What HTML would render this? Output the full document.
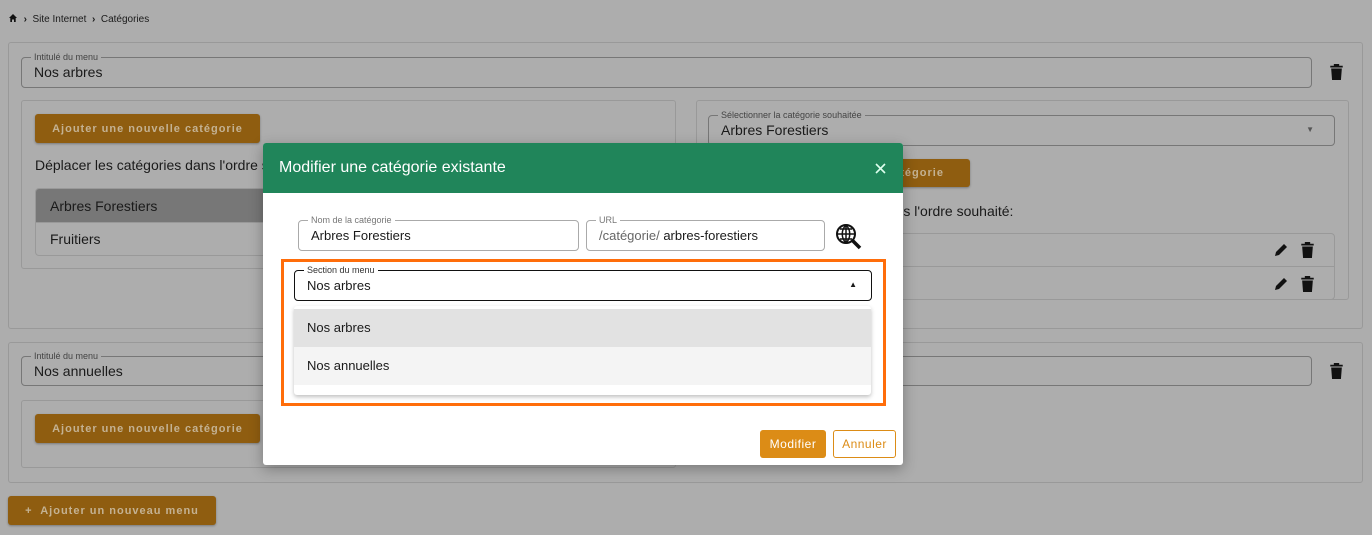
<!DOCTYPE html>
<html><head><meta charset="utf-8"><style>
*{box-sizing:border-box;margin:0;padding:0}
body{width:1372px;height:535px;overflow:hidden;background:#adadad;font-family:"Liberation Sans",sans-serif;color:#1a1a1a;position:relative}
.abs{position:absolute}
.card{position:absolute;border:1px solid #999;border-radius:3px}
.field{position:absolute;border:1px solid #777;border-radius:4px}
.lbl{position:absolute;top:-7px;left:9px;font-size:9px;color:#444;background:#adadad;padding:0 3px;line-height:12px}
.val{position:absolute;left:12px;font-size:14px}
.btn{position:absolute;background:#8f5d10;color:#c4b293;font-size:11px;font-weight:bold;letter-spacing:1px;border-radius:3px;display:flex;align-items:center;justify-content:center;box-shadow:0 1px 2px rgba(0,0,0,.3)}
.m{font-family:"Liberation Sans",sans-serif}
</style></head><body>
<div class="abs" style="left:8px;top:13px;font-size:10px">
<svg width="10" height="10" viewBox="0 0 10 10" style="vertical-align:-1px"><path d="M5 1 L1 5 H2.3 V9 H4 V6.5 H6 V9 H7.7 V5 H9Z" fill="#111"/></svg>
&nbsp;<b>›</b>&nbsp; Site Internet &nbsp;<b>›</b>&nbsp; Catégories</div>

<div class="card" style="left:8px;top:42px;width:1355px;height:287px"></div>
<div class="field" style="left:21px;top:57px;width:1291px;height:31px"><span class="lbl">Intitulé du menu</span><span class="val" style="top:6px">Nos arbres</span></div>
<svg class="abs" style="left:1330px;top:64px" width="13" height="16" viewBox="0 0 14 18"><path d="M4 0h6v2h4v2H0V2h4zM1 5h12l-1 13H2z" fill="#111"/></svg>
<div class="card" style="left:21px;top:100px;width:655px;height:169px"></div>
<div class="btn" style="left:35px;top:114px;width:225px;height:29px">Ajouter une nouvelle catégorie</div>
<div class="abs" style="left:35px;top:157px;font-size:14px">Déplacer les catégories dans l'ordre souhaité:</div>
<div class="abs" style="left:35px;top:188px;width:300px;height:68px;border:1px solid #999;border-radius:4px;overflow:hidden">
<div style="height:34px;background:#777;padding:9px 14px;font-size:14px;border-bottom:1px solid #999">Arbres Forestiers</div>
<div style="height:34px;padding:8px 14px;font-size:14px">Fruitiers</div></div>

<div class="card" style="left:696px;top:100px;width:653px;height:200px"></div>
<div class="field" style="left:708px;top:115px;width:627px;height:31px"><span class="lbl">Sélectionner la catégorie souhaitée</span><span class="val" style="top:6px">Arbres Forestiers</span><span class="abs" style="right:20px;top:9px;font-size:8px;color:#555">▼</span></div>
<div class="btn" style="left:860px;top:159px;width:110px;height:28px">catégorie</div>
<div class="abs" style="left:880px;top:203px;font-size:14px">dans l'ordre souhaité:</div>
<div class="abs" style="left:880px;top:233px;width:455px;height:67px;border:1px solid #999;border-radius:4px"><div style="border-bottom:1px solid #999;height:33px"></div></div>
<svg class="abs" style="left:1273px;top:242px" width="16" height="16" viewBox="0 0 16 16"><path d="M2 14l1-4 8-8 3 3-8 8z" fill="#111"/></svg>
<svg class="abs" style="left:1301px;top:242px" width="13" height="16" viewBox="0 0 14 18"><path d="M4 0h6v2h4v2H0V2h4zM1 5h12l-1 13H2z" fill="#111"/></svg>
<svg class="abs" style="left:1273px;top:276px" width="16" height="16" viewBox="0 0 16 16"><path d="M2 14l1-4 8-8 3 3-8 8z" fill="#111"/></svg>
<svg class="abs" style="left:1301px;top:276px" width="13" height="16" viewBox="0 0 14 18"><path d="M4 0h6v2h4v2H0V2h4zM1 5h12l-1 13H2z" fill="#111"/></svg>

<div class="card" style="left:8px;top:342px;width:1355px;height:141px"></div>
<div class="field" style="left:21px;top:356px;width:1291px;height:30px"><span class="lbl">Intitulé du menu</span><span class="val" style="top:6px">Nos annuelles</span></div>
<svg class="abs" style="left:1330px;top:363px" width="13" height="16" viewBox="0 0 14 18"><path d="M4 0h6v2h4v2H0V2h4zM1 5h12l-1 13H2z" fill="#111"/></svg>
<div class="card" style="left:21px;top:400px;width:655px;height:68px"></div>
<div class="btn" style="left:35px;top:414px;width:225px;height:29px">Ajouter une nouvelle catégorie</div>
<div class="btn" style="left:8px;top:496px;width:208px;height:29px">+&nbsp; Ajouter un nouveau menu</div>

<div class="abs" style="left:263px;top:143px;width:640px;height:322px;background:#fff;border-radius:3px;box-shadow:0 4px 14px rgba(0,0,0,.3);overflow:hidden">
<div class="m" style="height:50px;background:#20855a;color:#fff;font-size:16px;padding:16px 16px">Modifier une catégorie existante<svg style="position:absolute;right:17px;top:20px" width="11" height="11" viewBox="0 0 11 11"><path d="M1 1l9 9M10 1l-9 9" stroke="#dfe" stroke-width="1.6"/></svg></div>
<div class="field m" style="left:35px;top:77px;width:281px;height:31px;border-color:#aaa"><span class="lbl" style="background:#fff;color:#777">Nom de la catégorie</span><span class="val" style="top:7px;font-size:13px">Arbres Forestiers</span></div>
<div class="field m" style="left:323px;top:77px;width:239px;height:31px;border-color:#aaa"><span class="lbl" style="background:#fff;color:#777">URL</span><span class="val" style="top:7px;font-size:13px"><span style="color:#666">/catégorie/</span> arbres-forestiers</span></div>
<svg class="abs" style="left:572px;top:80px" width="27" height="27" viewBox="0 0 27 27"><circle cx="11" cy="11" r="9" fill="none" stroke="#111" stroke-width="2"/><path d="M2 11h18M11 2v18M5 6h12M5 16h12M11 2c-5 5-5 13 0 18M11 2c5 5 5 13 0 18" fill="none" stroke="#111" stroke-width="1.5"/><path d="M17 17l8 8" stroke="#111" stroke-width="3.5"/></svg>
<div class="abs" style="left:18px;top:116px;width:605px;height:147px;border:3px solid #ff6d0a"></div>
<div class="field m" style="left:31px;top:127px;width:578px;height:31px;border-color:#111"><span class="lbl" style="background:#fff;color:#333">Section du menu</span><span class="val" style="top:7px;font-size:13px">Nos arbres</span><span class="abs" style="right:14px;top:9px;font-size:8px">▲</span></div>
<div class="abs m" style="left:31px;top:163px;width:577px;height:89px;background:#fff;box-shadow:0 2px 4px rgba(0,0,0,.25);border-radius:3px;font-size:13px">
<div style="margin-top:3px;height:38px;background:#e2e2e2;padding:11px 13px">Nos arbres</div>
<div style="height:38px;background:#f4f4f4;padding:11px 13px">Nos annuelles</div></div>
<div class="abs m" style="left:497px;top:287px;width:66px;height:28px;background:#dc8c16;color:#fff;font-size:12px;border-radius:3px;display:flex;align-items:center;justify-content:center;letter-spacing:.5px">Modifier</div>
<div class="abs m" style="left:570px;top:287px;width:63px;height:28px;border:1px solid #dc8c16;color:#dc8c16;font-size:12px;border-radius:3px;display:flex;align-items:center;justify-content:center;letter-spacing:.5px">Annuler</div>
</div>
</body></html>
